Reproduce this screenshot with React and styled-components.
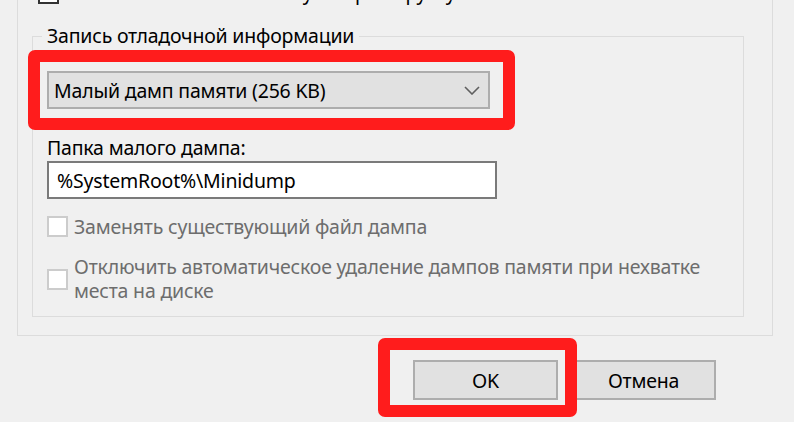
import React from "react";
import styled, { createGlobalStyle } from "styled-components";

const Global = createGlobalStyle`
  html, body { margin: 0; padding: 0; background: #f0f0f0; overflow: hidden; }
  * { box-sizing: border-box; }
`;

const Frame = styled.div`
  position: relative;
  width: 794px;
  height: 422px;
  overflow: hidden;
  background: #f0f0f0;
  font-family: "Noto Sans", "Open Sans", sans-serif;
  font-size: 19.5px;
  letter-spacing: -0.2px;
  color: #000;
`;

const OuterBox = styled.div`
  margin: -24px 0 0 17px;
  width: 756px;
  border: 1px solid #dcdcdc;
  padding: 0 28px 18px 14px;
`;

const CheckRow = styled.label`
  display: flex;
  align-items: center;
  gap: 6px;
  height: ${(p) => (p.$h ? `${p.$h}px` : "auto")};
  margin: ${(p) => p.$m || "0"};
  color: ${(p) => (p.$disabled ? "#6d6d6d" : "#000")};
  line-height: ${(p) => (p.$lh ? `${p.$lh}px` : "26px")};
`;

const Box = styled.span`
  flex: none;
  width: 21px;
  height: 21px;
  background: #fff;
  border: 2px solid ${(p) => (p.$disabled ? "#cccccc" : "#333333")};
`;

const Group = styled.fieldset`
  margin: 14px 0 0 0;
  padding: 0 14px 13px 14px;
  border: 1px solid #dcdcdc;
  min-width: 0;
`;

const Legend = styled.legend`
  margin-left: -5px;
  padding: 0 5px;
  line-height: 26px;
`;

const Select = styled.div`
  display: flex;
  align-items: center;
  justify-content: space-between;
  width: 443px;
  height: 38px;
  margin-top: ${(p) => p.$mt}px;
  padding: 0 8px 0 5px;
  background: #e1e1e1;
  border: 2px solid #adadad;
`;

const FieldLabel = styled.div`
  margin-top: 26px;
  line-height: 26px;
`;

const Input = styled.div`
  width: 450px;
  height: 38px;
  display: flex;
  align-items: center;
  padding-left: 8px;
  background: #fff;
  border: 2px solid #7a7a7a;
`;

const ButtonRow = styled.div`
  display: flex;
  justify-content: flex-end;
  gap: 13px;
  margin-top: 24px;
  padding-right: 78px;
`;

const Button = styled.div`
  width: 145px;
  height: 40px;
  display: flex;
  align-items: center;
  justify-content: center;
  background: #e1e1e1;
  border: 2px solid #adadad;
`;

const Highlight = styled.div`
  position: absolute;
  left: ${(p) => p.$x}px;
  top: ${(p) => p.$y}px;
  width: ${(p) => p.$w}px;
  height: ${(p) => p.$h}px;
  border: 12px solid #ff1c1c;
  border-radius: 7px;
  pointer-events: none;
`;

const Chevron = () => (
  <svg width="16" height="9" viewBox="0 0 16 9">
    <path d="M1 1 L8 8 L15 1" fill="none" stroke="#5f5f5f" strokeWidth="1.6" />
  </svg>
);

export default function App() {
  return (
    <Frame>
      <Global />
      <OuterBox>
        <CheckRow $h={32} $m="0 0 0 6px">
          <Box />
          <span>Выполнить автоматическую перезагрузку</span>
        </CheckRow>
        <Group>
          <Legend>Запись отладочной информации</Legend>
          <Select $mt={22}>
            <span>Малый дамп памяти (256 KB)</span>
            <Chevron />
          </Select>
          <FieldLabel>Папка малого дампа:</FieldLabel>
          <Input>%SystemRoot%\Minidump</Input>
          <CheckRow $disabled $h={30} $m="12.5px 0 0 0">
            <Box $disabled />
            <span>Заменять существующий файл дампа</span>
          </CheckRow>
          <CheckRow $disabled $lh={24} $m="13.5px 0 0 0">
            <Box $disabled />
            <span>
              Отключить автоматическое удаление дампов памяти при нехватке
              <br />
              места на диске
            </span>
          </CheckRow>
        </Group>
      </OuterBox>
      <ButtonRow>
        <Button>OK</Button>
        <Button>Отмена</Button>
      </ButtonRow>
      <Highlight $x={28} $y={50} $w={487} $h={80} />
      <Highlight $x={378} $y={338} $w={199} $h={79} />
    </Frame>
  );
}
